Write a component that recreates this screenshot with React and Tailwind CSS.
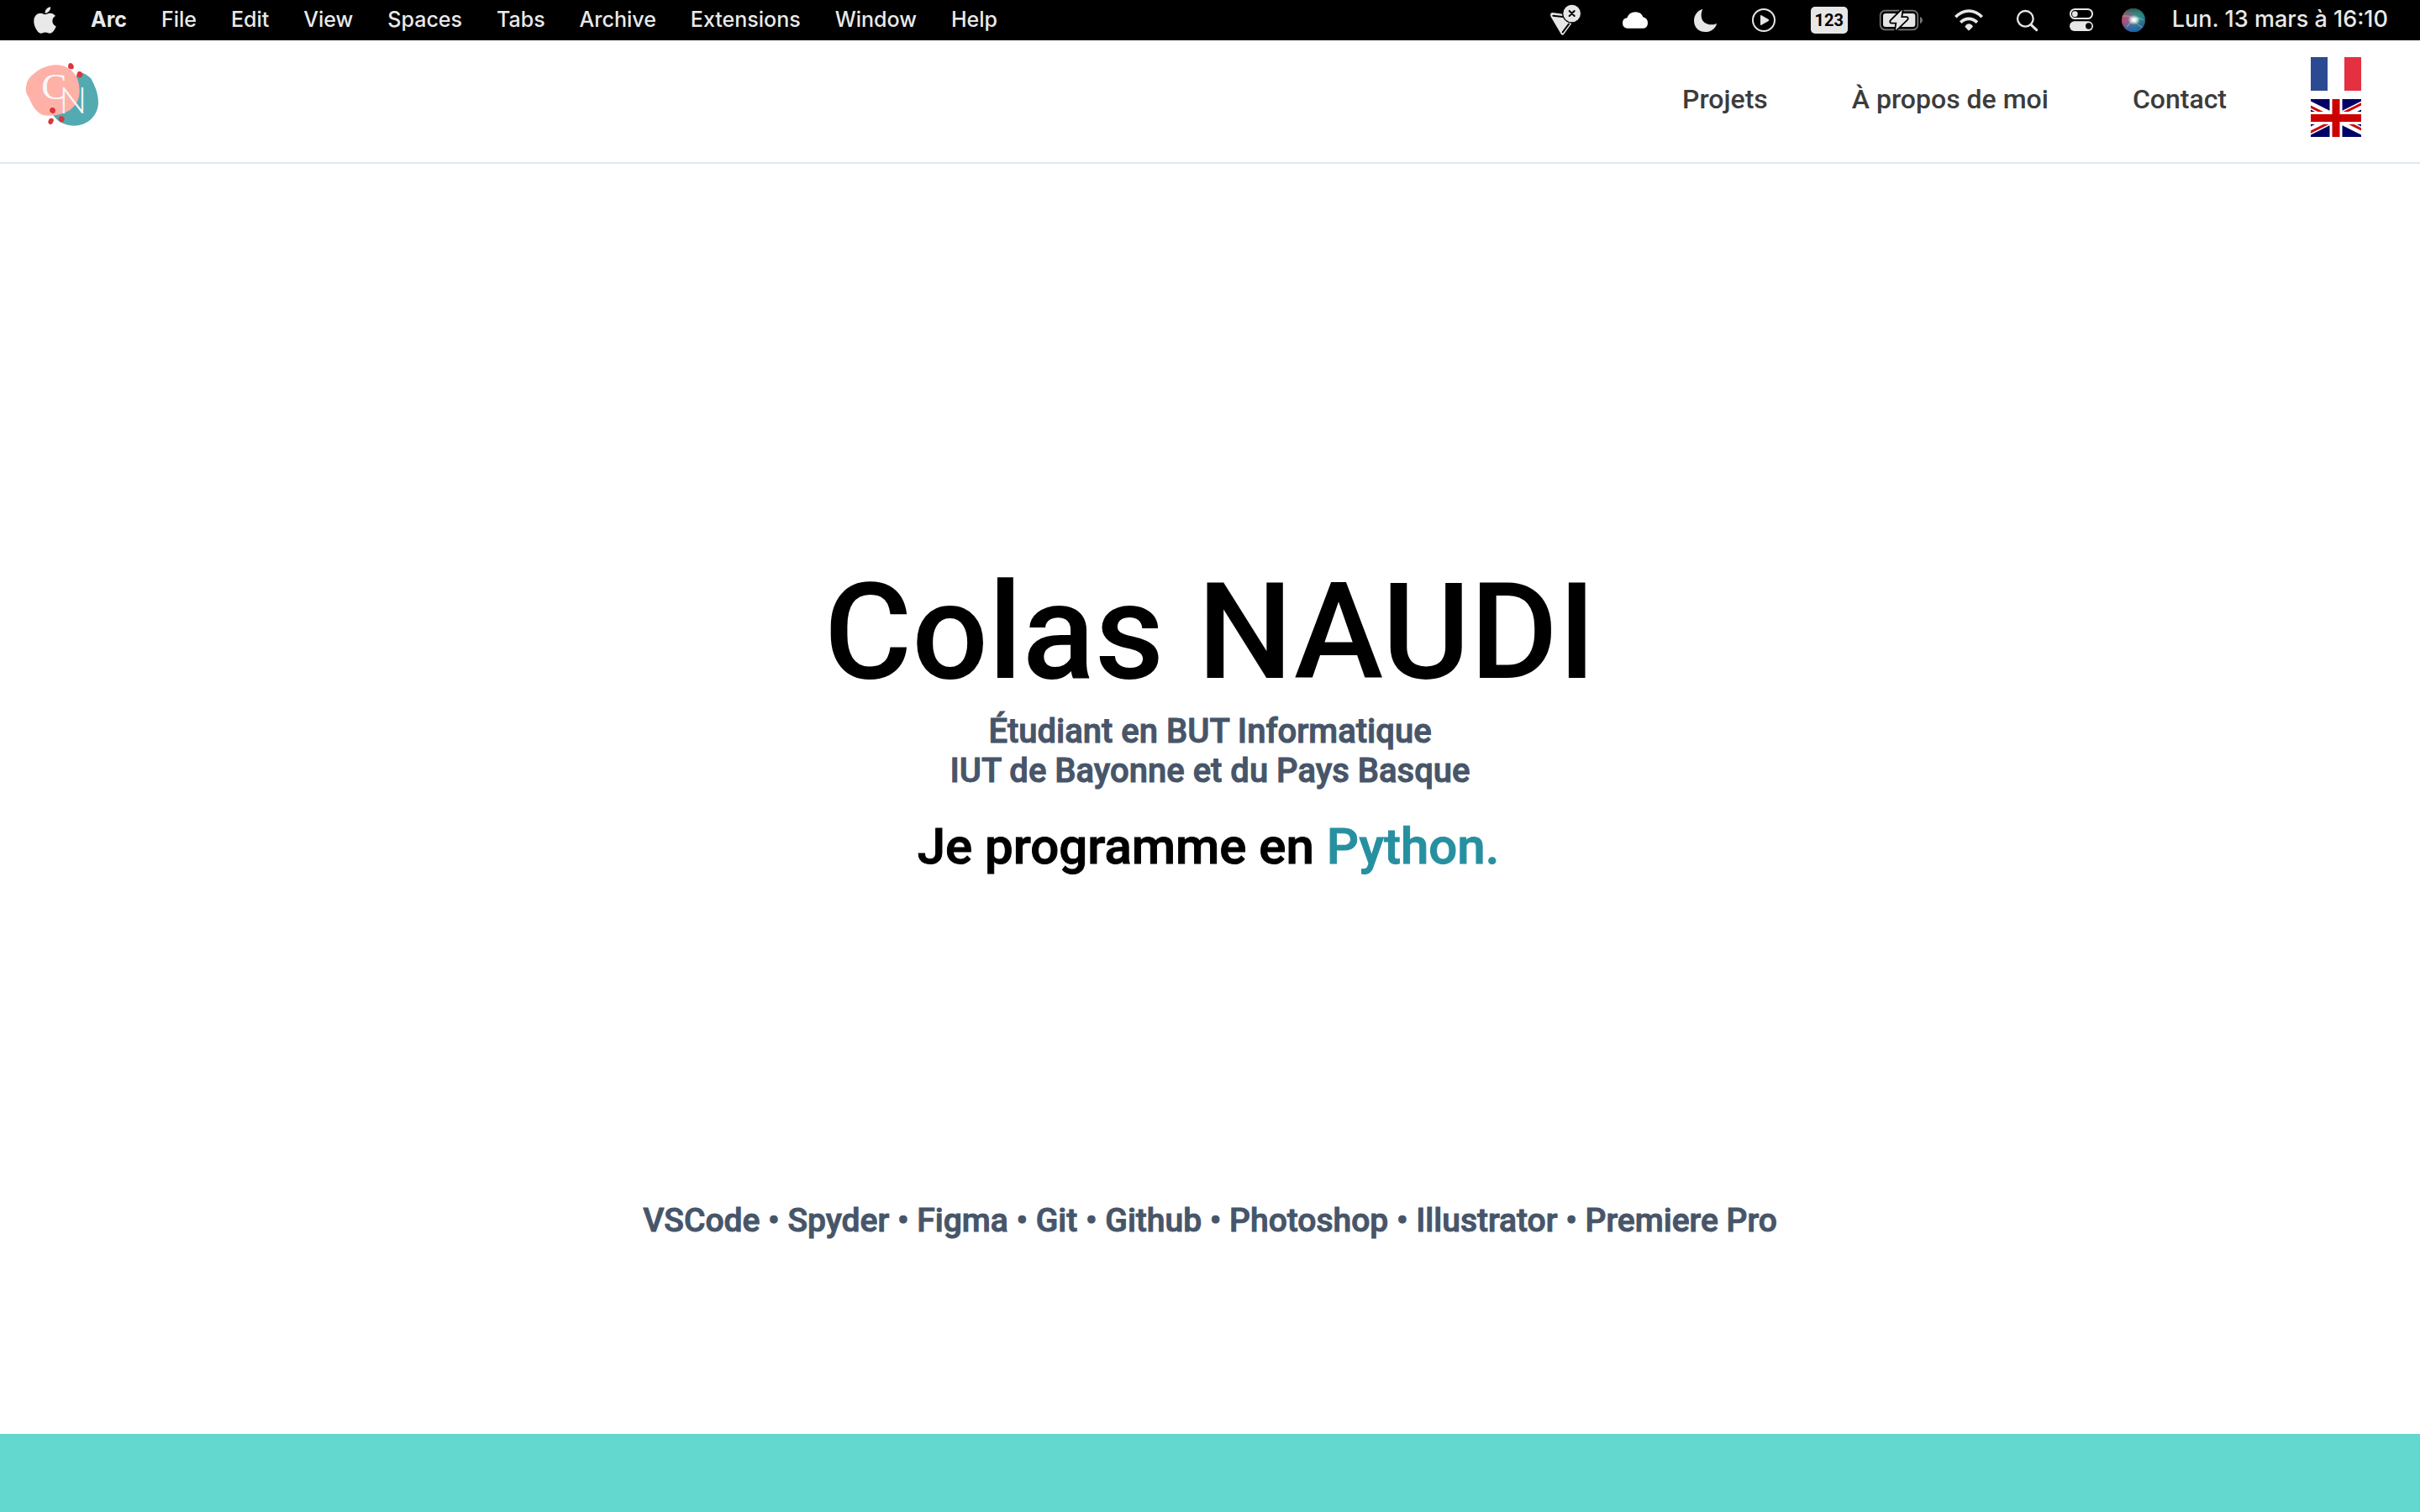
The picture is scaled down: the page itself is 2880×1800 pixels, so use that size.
import React from "react";
import { FaApple } from "react-icons/fa";

const menus = ["File", "Edit", "View", "Spaces", "Tabs", "Archive", "Extensions", "Window", "Help"];
const skills = ["VSCode", "Spyder", "Figma", "Git", "Github", "Photoshop", "Illustrator", "Premiere Pro"];

function StatusItem({ label, className, viewBox, children }) {
  return (
    <button type="button" aria-label={label} className={className}>
      <svg viewBox={viewBox} className="block h-full w-full" fill="#e6e6e6">
        {children}
      </svg>
    </button>
  );
}

function StatusIcons() {
  return (
    <>
      <StatusItem label="Déconnecté" className="h-12 w-12" viewBox="72 0 144 144">
        <path d="M79 45 L118 50 L118 62 L132 78 L148 84 L120 123 Q116 127 111 123 L74 60 Q69 46 79 45Z" />
        <path d="M82 56 L116 60 M138 86 L116 115" stroke="#000" strokeWidth="6" strokeLinecap="round" />
        <circle cx="149" cy="47" r="35" fill="#000" />
        <circle cx="149" cy="48" r="31" />
        <path d="M140 39 L158 57 M158 39 L140 57" stroke="#000" strokeWidth="6" strokeLinecap="round" />
      </StatusItem>
      <StatusItem label="Cloud" className="h-12 w-[54px]" viewBox="312 0 162 144">
        <path
          fill="#fff"
          d="M346 101 Q330 99 330 82 Q330 66 346 64 Q353 43 376 43 Q397 43 403 61 Q420 65 420 83 Q419 100 404 101Z"
        />
      </StatusItem>
      <StatusItem label="Ne pas déranger" className="h-12 w-[38px]" viewBox="570 0 114 144">
        <path d="M616 33 C600 36 585 52 585 74 C585 98 603 114 626 114 C648 114 664 99 666 83 C658 88 652 88 646 88 C624 88 611 74 611 55 C611 45 613 39 616 33Z" />
      </StatusItem>
      <StatusItem label="Lecture en cours" className="h-12 w-10" viewBox="780 0 120 144">
        <circle cx="834" cy="72" r="39" fill="none" stroke="#e6e6e6" strokeWidth="6" />
        <path d="M822 57 Q822 53 826 55 L851 69 Q854 72 851 75 L826 89 Q822 91 822 87Z" />
      </StatusItem>
      <button
        type="button"
        className="mr-1 ml-0.5 h-8 w-11 rounded-[5px] bg-[#e6e6e6] text-center font-['Roboto',sans-serif] text-[20px] leading-8 font-bold text-black"
      >
        123
      </button>
      <StatusItem label="Batterie" className="h-12 w-14" viewBox="102 0 168 144">
        <rect x="110" y="38" width="134" height="68" rx="17" fill="none" stroke="#777" strokeWidth="5" />
        <path d="M252 60 Q261 63 261 72 Q261 81 252 84Z" fill="#777" />
        <rect x="120" y="48" width="115" height="48" rx="9" />
        <path
          d="M188 35 L148 75 Q146 80 151 80 L169 80 L165 108 L206 68 Q208 63 203 63 L184 63Z"
          stroke="#000"
          strokeWidth="11"
          strokeLinejoin="round"
          paintOrder="stroke"
        />
      </StatusItem>
      <StatusItem label="Wi-Fi" className="h-12 w-[42px]" viewBox="366 0 126 144">
        <g fill="none" stroke="#e6e6e6" strokeWidth="11">
          <path d="M379 61 Q400 39 426 39 Q453 39 473 61" />
          <path d="M397 80 Q409 67 426 67 Q443 67 456 80" />
        </g>
        <path d="M412 95 Q418 85 426 85 Q435 85 441 95 L429 107 Q426 110 423 107Z" />
      </StatusItem>
      <StatusItem label="Rechercher" className="h-12 w-8" viewBox="588 0 96 144">
        <circle cx="628" cy="67" r="28" fill="none" stroke="#e6e6e6" strokeWidth="7" />
        <path d="M648 88 L668 107" stroke="#e6e6e6" strokeWidth="9" strokeLinecap="round" />
      </StatusItem>
      <StatusItem label="Centre de contrôle" className="h-12 w-[30px]" viewBox="780 0 90 144">
        <rect x="789" y="33" width="78" height="33" rx="16" fill="none" stroke="#e6e6e6" strokeWidth="6" />
        <circle cx="805" cy="50" r="10" />
        <rect x="786" y="76" width="84" height="35" rx="17" />
        <circle cx="854" cy="93" r="11" fill="#000" />
      </StatusItem>
      <StatusItem label="Siri" className="h-12 w-[30px]" viewBox="966 0 90 144">
        <defs>
          <linearGradient id="siriBase" x1="0" y1="0" x2="1" y2="0.3">
            <stop offset="0" stopColor="#d8305f" />
            <stop offset="0.45" stopColor="#8c6a8c" />
            <stop offset="0.75" stopColor="#2f8f8c" />
            <stop offset="1" stopColor="#2b6f7f" />
          </linearGradient>
          <linearGradient id="siriShade" x1="0" y1="0" x2="0" y2="1">
            <stop offset="0" stopColor="#0c5b47" stopOpacity="0.9" />
            <stop offset="0.45" stopColor="#3aa79a" stopOpacity="0" />
            <stop offset="0.6" stopColor="#2b5fa8" stopOpacity="0.1" />
            <stop offset="1" stopColor="#1b5fae" />
          </linearGradient>
          <radialGradient id="siriGlow">
            <stop offset="0" stopColor="#fff" />
            <stop offset="0.35" stopColor="#fff" stopOpacity="0.85" />
            <stop offset="1" stopColor="#fff" stopOpacity="0" />
          </radialGradient>
        </defs>
        <circle cx="1014" cy="72" r="42" fill="url(#siriBase)" />
        <circle cx="1014" cy="72" r="42" fill="url(#siriShade)" />
        <path d="M976 58 Q1000 52 1016 72 Q1032 94 1046 98" fill="none" stroke="#f0a8c4" strokeWidth="3" opacity="0.6" />
        <path d="M990 96 Q1004 78 1018 70 Q1036 60 1050 72" fill="none" stroke="#9be8e4" strokeWidth="3" opacity="0.6" />
        <ellipse cx="1016" cy="71" rx="22" ry="18" fill="url(#siriGlow)" />
      </StatusItem>
    </>
  );
}

function MenuBar() {
  return (
    <div className="flex h-12 items-center justify-between bg-black pr-[38px] pl-10 font-['Inter',sans-serif] text-[25px] leading-8 text-[#e9e9e9]">
      <div className="flex items-center gap-[41px]">
        <button type="button" aria-label="Apple">
          <FaApple className="h-9 w-[27px]" />
        </button>
        <button type="button" className="pb-0.5 font-bold">
          Arc
        </button>
        {menus.map((m) => (
          <button type="button" key={m} className="pb-0.5">
            {m}
          </button>
        ))}
      </div>
      <div className="flex items-center gap-8">
        <StatusIcons />
        <time className="pb-0.5 text-[27px]">Lun. 13 mars à 16:10</time>
      </div>
    </div>
  );
}

function Logo() {
  return (
    <svg viewBox="0 24 330 300" className="h-[100px] w-[110px]" aria-label="CN">
      <path
        fill="#53abb1"
        d="M222 77 C240 80 256 90 266 102 C276 122 291 150 291 188 C289 234 252 269 203 269 C168 268 142 252 128 228 L180 140Z"
      />
      <path
        fill="#feb1a7"
        d="M138 52 C176 52 198 70 212 92 C224 116 226 144 222 166 C214 204 178 226 140 231 C116 234 92 236 78 222 C60 206 54 194 46 174 C38 160 32 150 32 140 C34 118 38 108 44 100 C66 74 100 53 138 52Z"
      />
      <g fill="#d9363e">
        <path d="M186 47 Q194 42 201 51 Q206 60 201 66 Q191 69 184 63 Q181 53 186 47Z" />
        <path d="M221 75 Q231 73 235 84 Q236 94 226 98 Q215 97 214 87 Q215 78 221 75Z" />
        <path d="M122 205 Q134 201 138 213 Q138 224 129 226 Q119 224 117 216 Q117 208 122 205Z" />
        <path d="M119 243 Q129 240 132 248 Q130 261 121 265 Q112 263 112 255 Q113 246 119 243Z" />
        <path d="M155 235 Q166 233 170 242 Q170 253 161 257 Q151 256 149 247 Q149 238 155 235Z" />
      </g>
      <g fill="#f7f8fa">
        <text x="88" y="173" className="font-['Liberation_Serif',serif] font-normal" fontSize="136">
          C
        </text>
        <text x="151" y="224" className="font-['Lato',sans-serif] font-light" fontSize="132">
          N
        </text>
      </g>
    </svg>
  );
}

function FrenchFlag() {
  return (
    <svg viewBox="0 0 60 40" className="block h-10 w-[60px]">
      <path fill="#2b4a91" d="M0 0h20v40H0z" />
      <path fill="#fff" d="M20 0h20v40H20z" />
      <path fill="#e43040" d="M40 0h20v40H40z" />
    </svg>
  );
}

function BritishFlag() {
  return (
    <svg viewBox="10 0 40 30" className="block h-[45px] w-[60px]">
      <clipPath id="saltire">
        <path d="M30 15h30v15z v15H0z H0V0z V0h30z" />
      </clipPath>
      <path fill="#006" d="M0 0h60v30H0z" />
      <path d="M0 0l60 30M60 0L0 30" stroke="#fff" strokeWidth="6" />
      <path d="M0 0l60 30M60 0L0 30" stroke="#c00" strokeWidth="4" clipPath="url(#saltire)" />
      <path d="M30 0v30M0 15h60" stroke="#fff" strokeWidth="10" />
      <path d="M30 0v30M0 15h60" stroke="#c00" strokeWidth="6" />
    </svg>
  );
}

export default function App() {
  return (
    <div className="flex min-h-screen flex-col bg-white font-['Roboto',sans-serif] font-medium">
      <MenuBar />
      <header className="flex items-start justify-between border-b-2 border-slate-200 pt-5 pr-[70px] pb-[25px] pl-5">
        <a href="#accueil">
          <Logo />
        </a>
        <nav className="flex items-center gap-[100px] text-[32px] leading-[38px] text-[#3c3c3c]">
          <a href="#projets">Projets</a>
          <a href="#a-propos">À propos de moi</a>
          <a href="#contact">Contact</a>
          <div className="flex flex-col gap-2.5 pb-[5px]">
            <button type="button" aria-label="Français">
              <FrenchFlag />
            </button>
            <button type="button" aria-label="English">
              <BritishFlag />
            </button>
          </div>
        </nav>
      </header>
      <main className="flex flex-1 flex-col items-center justify-between pt-[464px] pb-[230px] text-center">
        <div>
          <h1 className="text-[160px] leading-[188px] text-black">Colas NAUDI</h1>
          <h2 className="text-[40px] leading-[47px] text-[#475569] [-webkit-text-stroke:1px]">
            Étudiant en BUT Informatique
            <br />
            IUT de Bayonne et du Pays Basque
          </h2>
          <p className="mt-8 text-[60px] leading-[70px] text-black [-webkit-text-stroke:1px]">
            Je programme en <span className="border-r-4 border-transparent text-[#2790a0]">Python.</span>
          </p>
        </div>
        <p className="text-[39px] leading-[47px] text-[#475569] [-webkit-text-stroke:1px]">{skills.join(" • ")}</p>
      </main>
      <footer className="h-[93px] bg-[#62d8cf]" />
    </div>
  );
}
